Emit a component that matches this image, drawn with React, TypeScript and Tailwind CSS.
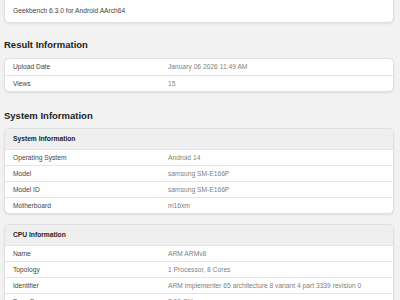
import React from "react";

type Row = { label: string; value: string };

const resultRows: Row[] = [
  { label: "Upload Date", value: "January 06 2026 11:49 AM" },
  { label: "Views", value: "15" },
];

const systemRows: Row[] = [
  { label: "Operating System", value: "Android 14" },
  { label: "Model", value: "samsung SM-E166P" },
  { label: "Model ID", value: "samsung SM-E166P" },
  { label: "Motherboard", value: "m16xm" },
];

const cpuRows: Row[] = [
  { label: "Name", value: "ARM ARMv8" },
  { label: "Topology", value: "1 Processor, 8 Cores" },
  { label: "Identifier", value: "ARM implementer 65 architecture 8 variant 4 part 3339 revision 0" },
  { label: "Base Frequency", value: "2.00 GHz" },
];

function Rows({ rows, first }: { rows: Row[]; first?: boolean }) {
  return (
    <>
      {rows.map((r, i) => (
        <div
          key={r.label}
          className={`flex h-[16px] items-center px-[8px] ${i === 0 && first ? "" : "border-t border-[#e6e6e6]"}`}
        >
          <div className="w-[155px] shrink-0 text-[#444]">{r.label}</div>
          <div className="whitespace-nowrap text-[#808080]">{r.value}</div>
        </div>
      ))}
    </>
  );
}

function Card({ children, className = "" }: { children: React.ReactNode; className?: string }) {
  return (
    <div
      className={`overflow-hidden rounded-[5px] border border-[#e0e0e0] bg-white shadow-[0_1px_2px_rgba(0,0,0,0.08)] ${className}`}
    >
      {children}
    </div>
  );
}

function Heading({ children, className = "" }: { children: React.ReactNode; className?: string }) {
  return (
    <h2 className={`h-[12px] text-[9.5px] leading-[12px] font-bold text-[#222] ${className}`}>{children}</h2>
  );
}

function SectionCard({ title, rows, className = "" }: { title: string; rows: Row[]; className?: string }) {
  return (
    <Card className={className}>
      <div className="flex h-[20px] items-center bg-[#efefef] px-[8px] font-bold text-[#222]">{title}</div>
      <Rows rows={rows} />
    </Card>
  );
}

export default function App() {
  return (
    <div
      className="h-[300px] w-[400px] overflow-hidden bg-[#f2f2f2] px-[4px] pr-[6px] text-[6.7px] leading-[8px]"
      style={{ fontFamily: '"Liberation Sans", Arial, sans-serif' }}
    >
      <Card className="mt-[-10px] flex h-[33px] items-end rounded-t-none pb-[7px] pl-[8px] text-[#444]">
        <span>Geekbench 6.3.0 for Android AArch64</span>
      </Card>

      <Heading className="mt-[16px]">Result Information</Heading>
      <Card className="mt-[7px]">
        <Rows rows={resultRows} first />
      </Card>

      <Heading className="mt-[18px]">System Information</Heading>
      <SectionCard className="mt-[6px]" title="System Information" rows={systemRows} />
      <SectionCard className="mt-[10px]" title="CPU Information" rows={cpuRows} />
    </div>
  );
}
